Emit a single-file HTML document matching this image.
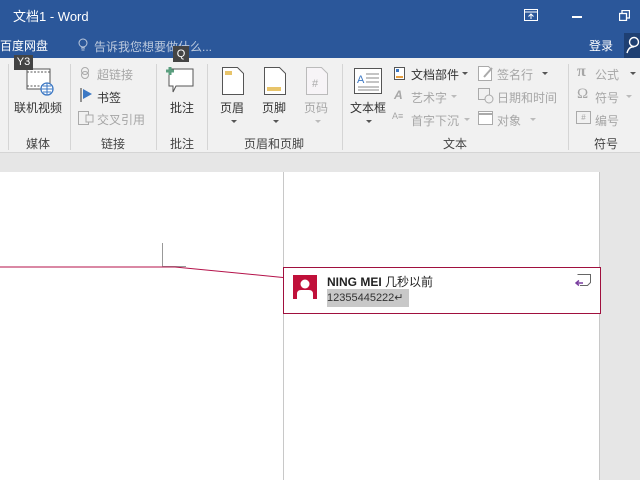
<!DOCTYPE html>
<html><head><meta charset="utf-8"><style>
*{margin:0;padding:0;box-sizing:border-box}
body{width:640px;height:480px;overflow:hidden;position:relative;background:#e6e6e6;font-family:"Liberation Sans","Noto Sans CJK SC",sans-serif;font-size:12px;color:#333}
.a{position:absolute;white-space:nowrap}
.g{color:#a6a6a6}
.sep{position:absolute;top:64px;width:1px;height:86px;background:#d5d5d5}
.lbl{position:absolute;top:135px;color:#444;font-size:12px}
.dd{position:absolute;width:0;height:0;border-left:3px solid transparent;border-right:3px solid transparent;border-top:3px solid #555}
</style></head><body>
<div class="a" style="left:0;top:0;width:640px;height:58px;background:#2b579a"></div>
<div class="a" style="left:13px;top:6px;color:#fff;font-size:13px">文档1 - Word</div>
<svg class="a" style="left:524px;top:9px" width="14" height="12"><rect x="0.5" y="0.5" width="13" height="11" fill="none" stroke="#fff"/><line x1="0" y1="3" x2="14" y2="3" stroke="#fff"/><path d="M7 10V5M4.5 7.5L7 5L9.5 7.5" stroke="#fff" fill="none"/></svg>
<div class="a" style="left:572px;top:16px;width:10px;height:2px;background:#fff"></div>
<svg class="a" style="left:619px;top:10px" width="11" height="11"><rect x="0.5" y="3.5" width="7" height="7" fill="none" stroke="#fff" stroke-width="1.3"/><path d="M3 3V0.5H10.5V8H8" fill="none" stroke="#fff" stroke-width="1.3"/></svg>
<div class="a" style="left:0;top:37px;color:#fff;font-size:12px">百度网盘</div>
<svg class="a" style="left:78px;top:38px" width="10" height="14"><circle cx="5" cy="5" r="4" fill="none" stroke="#bcc9dd"/><path d="M3 10h4M3.5 12h3" stroke="#bcc9dd"/></svg>
<div class="a" style="left:94px;top:38px;color:#bcc9dd;font-size:12px">告诉我您想要做什么...</div>
<div class="a" style="left:589px;top:37px;color:#fff;font-size:12px">登录</div>
<div class="a" style="left:624px;top:33px;width:16px;height:25px;background:#1e3f72"></div>
<svg class="a" style="left:626px;top:36px" width="14" height="18"><circle cx="8" cy="6" r="4.5" fill="none" stroke="#fff" stroke-width="1.4"/><path d="M1 17Q3 10 8 11" fill="none" stroke="#fff" stroke-width="1.4"/></svg>
<div class="a" style="left:0;top:58px;width:640px;height:95px;background:#f1f1f1;border-bottom:1px solid #d5d5d5"></div>
<div class="sep" style="left:8px"></div><div class="sep" style="left:70px"></div><div class="sep" style="left:156px"></div><div class="sep" style="left:207px"></div><div class="sep" style="left:342px"></div><div class="sep" style="left:568px"></div>
<svg class="a" style="left:26px;top:68px" width="30" height="30"><rect x="1" y="1" width="23" height="20" fill="#fff" stroke="#555"/><path d="M1 4h23M1 18h23" stroke="#555" stroke-dasharray="2 1.5"/><circle cx="21" cy="21" r="6" fill="#fff" stroke="#3c78c4" stroke-width="1.3"/><path d="M15 21h12M21 15v12M17 18h8M17 24h8" stroke="#3c78c4"/></svg>
<div class="a" style="left:14px;top:55px;width:19px;height:15px;background:#444;color:#fff;font-size:11px;text-align:center;line-height:15px">Y3</div>
<div class="a" style="left:14px;top:99px">联机视频</div>
<div class="lbl" style="left:26px">媒体</div>
<svg class="a" style="left:78px;top:67px" width="14" height="12"><circle cx="7" cy="4" r="3.5" fill="none" stroke="#aaa"/><circle cx="7" cy="8" r="3.5" fill="none" stroke="#aaa"/></svg>
<div class="a g" style="left:97px;top:66px">超链接</div>
<svg class="a" style="left:80px;top:88px" width="14" height="14"><path d="M1 0v14" stroke="#333"/><path d="M3 1l9 5-9 5z" fill="#3c78c4"/></svg>
<div class="a" style="left:97px;top:89px">书签</div>
<svg class="a" style="left:78px;top:111px" width="16" height="15"><rect x="0.5" y="0.5" width="10" height="13" fill="none" stroke="#aaa"/><rect x="8" y="4" width="7" height="7" fill="#f1f1f1" stroke="#aaa"/></svg>
<div class="a g" style="left:97px;top:111px">交叉引用</div>
<div class="lbl" style="left:101px">链接</div>
<svg class="a" style="left:166px;top:67px" width="30" height="28"><path d="M3 2h24v17H10l-3 6v-6H3z" fill="#fff" stroke="#555"/><path d="M0 4h8M4 0v8" stroke="#5a9e7e" stroke-width="3"/></svg>
<div class="a" style="left:173px;top:46px;width:16px;height:16px;background:#444;color:#fff;font-size:11px;text-align:center;line-height:16px">Q</div>
<div class="a" style="left:170px;top:99px">批注</div>
<div class="lbl" style="left:170px">批注</div>
<svg class="a" style="left:222px;top:67px" width="22" height="28"><path d="M0.5 0.5h15l6 6v21H0.5z" fill="#fff" stroke="#555"/><rect x="3" y="4" width="7" height="4" fill="#e8c46a"/></svg>
<div class="a" style="left:220px;top:99px">页眉</div><div class="dd" style="left:231px;top:120px"></div>
<svg class="a" style="left:264px;top:67px" width="22" height="28"><path d="M0.5 0.5h15l6 6v21H0.5z" fill="#fff" stroke="#555"/><rect x="3" y="20" width="14" height="4" fill="#e8c46a"/></svg>
<div class="a" style="left:262px;top:99px">页脚</div><div class="dd" style="left:273px;top:120px"></div>
<svg class="a" style="left:306px;top:67px" width="22" height="28"><path d="M0.5 0.5h15l6 6v21H0.5z" fill="#f7f4f7" stroke="#bbb"/><text x="6" y="20" font-size="11" fill="#aaa" font-family="Liberation Sans">#</text></svg>
<div class="a g" style="left:304px;top:99px">页码</div><div class="dd" style="left:315px;top:120px;border-top-color:#bbb"></div>
<div class="lbl" style="left:244px">页眉和页脚</div>
<svg class="a" style="left:354px;top:68px" width="28" height="26"><rect x="0.5" y="0.5" width="27" height="25" fill="#fff" stroke="#555"/><text x="3" y="15" font-size="11" fill="#3c78c4" font-family="Liberation Sans">A</text><path d="M12 6h13M12 10h13M12 14h13M4 19h21M4 22h21" stroke="#888"/></svg>
<div class="a" style="left:350px;top:99px">文本框</div><div class="dd" style="left:366px;top:120px"></div>
<svg class="a" style="left:394px;top:67px" width="12" height="13"><rect x="0.5" y="0.5" width="10" height="12" fill="#fff" stroke="#555"/><rect x="2" y="2" width="3" height="3" fill="#3c78c4"/><rect x="2" y="9" width="7" height="2" fill="#e8a040"/></svg>
<div class="a" style="left:411px;top:66px">文档部件</div><div class="dd" style="left:462px;top:72px"></div>
<div class="a g" style="left:394px;top:88px;font-style:italic;font-weight:bold">A</div>
<div class="a g" style="left:411px;top:89px">艺术字</div><div class="dd" style="left:451px;top:95px;border-top-color:#bbb"></div>
<div class="a g" style="left:392px;top:111px;font-size:9px">A≡</div>
<div class="a g" style="left:411px;top:112px">首字下沉</div><div class="dd" style="left:464px;top:118px;border-top-color:#bbb"></div>
<svg class="a" style="left:478px;top:66px" width="16" height="15"><path d="M0.5 0.5h10l3 3v11H0.5z" fill="#fff" stroke="#aaa"/><path d="M6 11l8-9" stroke="#aaa" stroke-width="2"/></svg>
<div class="a g" style="left:497px;top:66px">签名行</div><div class="dd" style="left:542px;top:72px"></div>
<svg class="a" style="left:478px;top:88px" width="16" height="16"><rect x="0.5" y="0.5" width="11" height="11" fill="none" stroke="#aaa"/><circle cx="11" cy="11" r="4" fill="#f1f1f1" stroke="#aaa"/></svg>
<div class="a g" style="left:497px;top:89px">日期和时间</div>
<svg class="a" style="left:478px;top:111px" width="16" height="15"><rect x="0.5" y="0.5" width="14" height="13" fill="#fff" stroke="#aaa"/><path d="M0 3h15" stroke="#aaa" stroke-width="2"/></svg>
<div class="a g" style="left:497px;top:112px">对象</div><div class="dd" style="left:530px;top:118px;border-top-color:#bbb"></div>
<div class="lbl" style="left:443px">文本</div>
<div class="a g" style="left:577px;top:63px;font-size:16px;font-weight:bold;font-family:'Liberation Serif',serif">π</div>
<div class="a g" style="left:595px;top:66px">公式</div><div class="dd" style="left:630px;top:72px"></div>
<div class="a g" style="left:577px;top:86px;font-size:15px;font-family:'Liberation Serif',serif">Ω</div>
<div class="a g" style="left:595px;top:89px">符号</div><div class="dd" style="left:626px;top:95px;border-top-color:#bbb"></div>
<div class="a g" style="left:576px;top:111px;width:15px;height:13px;border:1px solid #aaa;font-size:8px;text-align:center;line-height:11px">#</div>
<div class="a g" style="left:595px;top:112px">编号</div>
<div class="lbl" style="left:594px">符号</div>
<div class="a" style="left:0;top:172px;width:600px;height:308px;background:#fff;border-right:1px solid #c8c8c8"></div>
<div class="a" style="left:283px;top:172px;width:1px;height:308px;background:#c8c8c8"></div>
<div class="a" style="left:162px;top:243px;width:1px;height:24px;background:#999"></div>
<div class="a" style="left:162px;top:266px;width:24px;height:1px;background:#999"></div>
<svg class="a" style="left:0;top:260px" width="290" height="25"><path d="M0 7H175L283 17.5" fill="none" stroke="#b4124a" stroke-width="1"/></svg>
<div class="a" style="left:283px;top:267px;width:318px;height:47px;border:1px solid #a0103e;background:#fff"></div>
<svg class="a" style="left:293px;top:275px" width="24" height="24"><rect width="24" height="24" fill="#c0103a"/><circle cx="12" cy="9" r="4.5" fill="#fff"/><path d="M4 24v-5q0-4 4-4h8q4 0 4 4v5z" fill="#fff"/></svg>
<div class="a" style="left:327px;top:273px;font-size:12px;color:#222"><b>NING MEI</b> 几秒以前</div>
<div class="a" style="left:327px;top:289px;height:18px;width:82px;background:#c8c8c8"></div>
<div class="a" style="left:327px;top:291px;font-size:11px;color:#333">12355445222↵</div>
<svg class="a" style="left:575px;top:274px" width="16" height="14"><path d="M2.5 0.5h13v8l-3 3H5" fill="#fff" stroke="#666"/><path d="M1 9h7M4 6.5L1 9l3 2.5" stroke="#7a3fa0" fill="none" stroke-width="1.5"/></svg>
</body></html>
